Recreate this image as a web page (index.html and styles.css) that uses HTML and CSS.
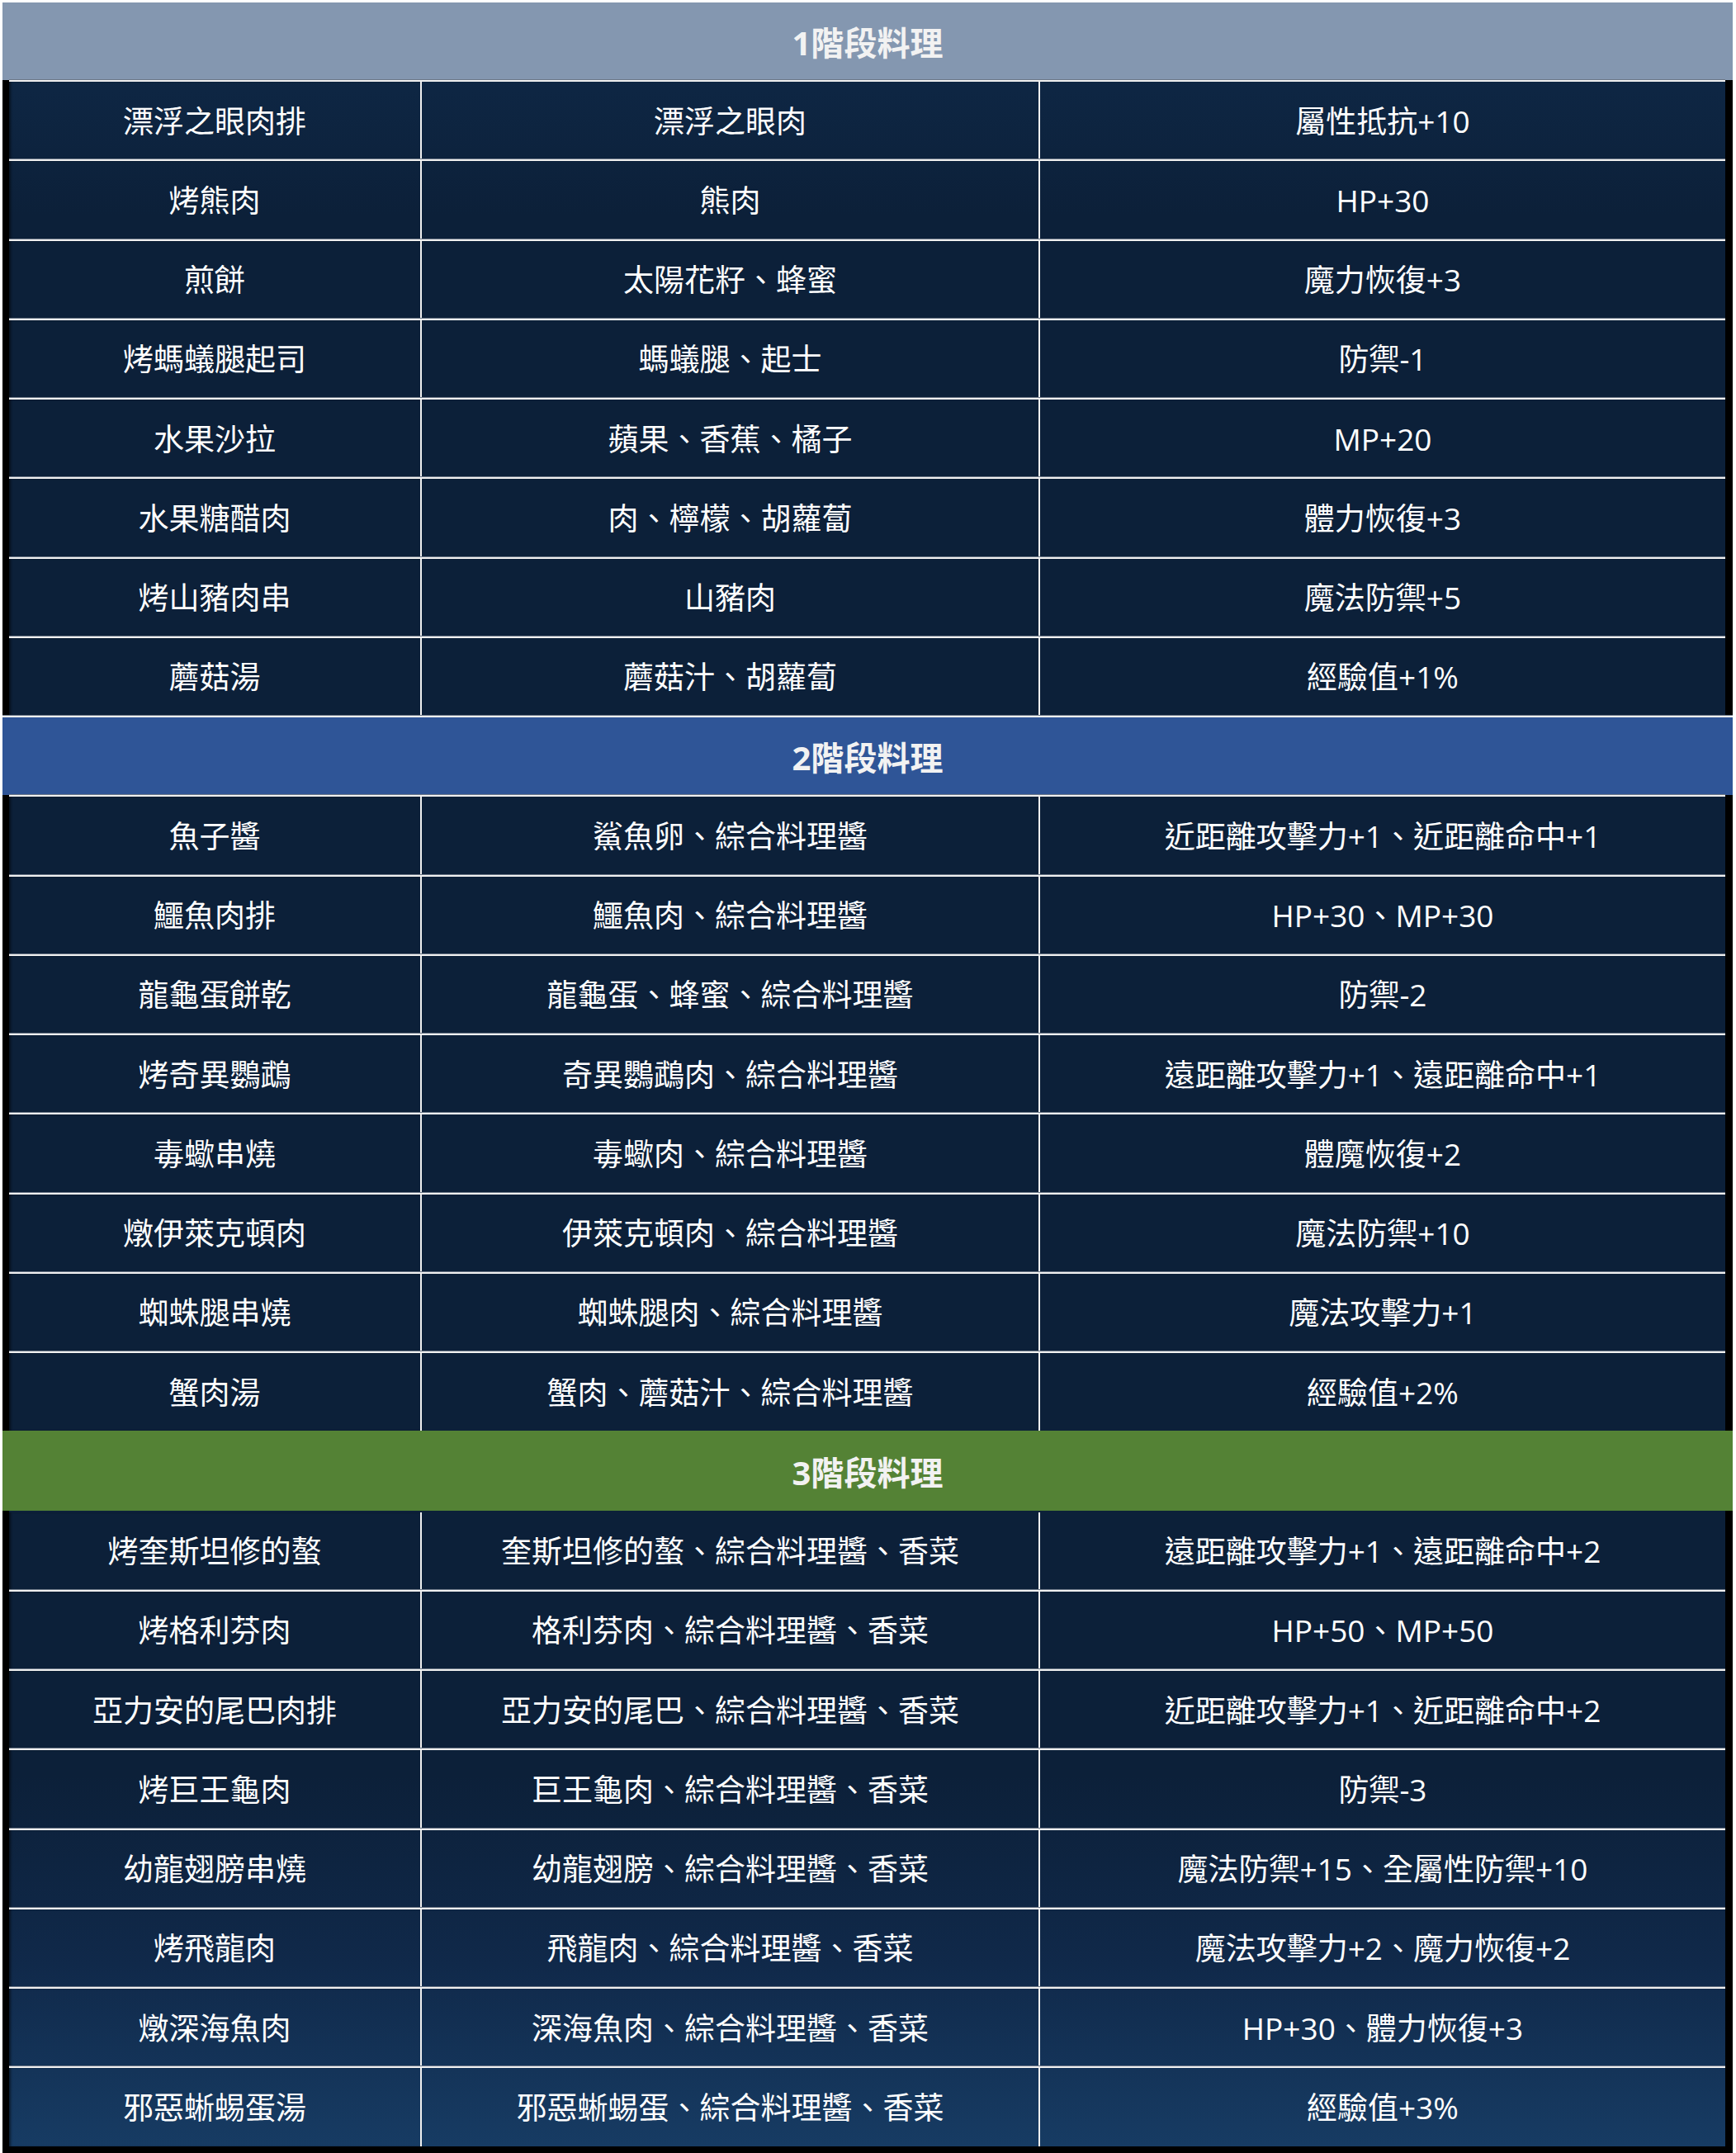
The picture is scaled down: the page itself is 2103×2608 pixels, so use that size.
FILE: index.html
```html
<!DOCTYPE html>
<html lang="zh-Hant">
<head>
<meta charset="utf-8">
<title>料理表</title>
<link rel="stylesheet" href="styles.css">
</head>
<body>
<div class="sheet">
  <div class="band band-1 first">1階段料理</div>
  <div class="row"><div class="c">漂浮之眼肉排</div><div class="c">漂浮之眼肉</div><div class="c">屬性抵抗+10</div></div>
  <div class="row"><div class="c">烤熊肉</div><div class="c">熊肉</div><div class="c">HP+30</div></div>
  <div class="row"><div class="c">煎餅</div><div class="c">太陽花籽、蜂蜜</div><div class="c">魔力恢復+3</div></div>
  <div class="row"><div class="c">烤螞蟻腿起司</div><div class="c">螞蟻腿、起士</div><div class="c">防禦-1</div></div>
  <div class="row"><div class="c">水果沙拉</div><div class="c">蘋果、香蕉、橘子</div><div class="c">MP+20</div></div>
  <div class="row"><div class="c">水果糖醋肉</div><div class="c">肉、檸檬、胡蘿蔔</div><div class="c">體力恢復+3</div></div>
  <div class="row"><div class="c">烤山豬肉串</div><div class="c">山豬肉</div><div class="c">魔法防禦+5</div></div>
  <div class="row"><div class="c">蘑菇湯</div><div class="c">蘑菇汁、胡蘿蔔</div><div class="c">經驗值+1%</div></div>

  <div class="band band-2">2階段料理</div>
  <div class="row"><div class="c">魚子醬</div><div class="c">鯊魚卵、綜合料理醬</div><div class="c">近距離攻擊力+1、近距離命中+1</div></div>
  <div class="row"><div class="c">鱷魚肉排</div><div class="c">鱷魚肉、綜合料理醬</div><div class="c">HP+30、MP+30</div></div>
  <div class="row"><div class="c">龍龜蛋餅乾</div><div class="c">龍龜蛋、蜂蜜、綜合料理醬</div><div class="c">防禦-2</div></div>
  <div class="row"><div class="c">烤奇異鸚鵡</div><div class="c">奇異鸚鵡肉、綜合料理醬</div><div class="c">遠距離攻擊力+1、遠距離命中+1</div></div>
  <div class="row"><div class="c">毒蠍串燒</div><div class="c">毒蠍肉、綜合料理醬</div><div class="c">體魔恢復+2</div></div>
  <div class="row"><div class="c">燉伊萊克頓肉</div><div class="c">伊萊克頓肉、綜合料理醬</div><div class="c">魔法防禦+10</div></div>
  <div class="row"><div class="c">蜘蛛腿串燒</div><div class="c">蜘蛛腿肉、綜合料理醬</div><div class="c">魔法攻擊力+1</div></div>
  <div class="row"><div class="c">蟹肉湯</div><div class="c">蟹肉、蘑菇汁、綜合料理醬</div><div class="c">經驗值+2%</div></div>

  <div class="band band-3">3階段料理</div>
  <div class="row after-green"><div class="c">烤奎斯坦修的螯</div><div class="c">奎斯坦修的螯、綜合料理醬、香菜</div><div class="c">遠距離攻擊力+1、遠距離命中+2</div></div>
  <div class="row"><div class="c">烤格利芬肉</div><div class="c">格利芬肉、綜合料理醬、香菜</div><div class="c">HP+50、MP+50</div></div>
  <div class="row"><div class="c">亞力安的尾巴肉排</div><div class="c">亞力安的尾巴、綜合料理醬、香菜</div><div class="c">近距離攻擊力+1、近距離命中+2</div></div>
  <div class="row"><div class="c">烤巨王龜肉</div><div class="c">巨王龜肉、綜合料理醬、香菜</div><div class="c">防禦-3</div></div>
  <div class="row"><div class="c">幼龍翅膀串燒</div><div class="c">幼龍翅膀、綜合料理醬、香菜</div><div class="c">魔法防禦+15、全屬性防禦+10</div></div>
  <div class="row"><div class="c">烤飛龍肉</div><div class="c">飛龍肉、綜合料理醬、香菜</div><div class="c">魔法攻擊力+2、魔力恢復+2</div></div>
  <div class="row"><div class="c">燉深海魚肉</div><div class="c">深海魚肉、綜合料理醬、香菜</div><div class="c">HP+30、體力恢復+3</div></div>
  <div class="row"><div class="c">邪惡蜥蜴蛋湯</div><div class="c">邪惡蜥蜴蛋、綜合料理醬、香菜</div><div class="c">經驗值+3%</div></div>
</div>
</body>
</html>
```

FILE: styles.css
```css
html, body {
  margin: 0;
  padding: 0;
  background: #ffffff;
  overflow: hidden;
}

body {
  font-family: "Open Sans", "Noto Sans CJK TC", "Noto Sans CJK SC", sans-serif;
  color: #ffffff;
}

.sheet {
  margin: 3px 0 0 3px;
  width: 2096px;
  padding-bottom: 8px;
  background: #000000;
  display: flex;
  flex-direction: column;
}

.band {
  height: 96.26px;
  box-sizing: border-box;
  border-top: 2px solid #f0f0f0;
  box-shadow: 0 -1px 0 #6d7888;
  display: flex;
  align-items: center;
  justify-content: center;
  font-size: 40px;
  font-weight: 700;
  color: #f2f2f2;
  position: relative;
}

.band.first {
  height: 94px;
  border-top: 0;
  box-shadow: none;
}

.band-1 { background: #8497b0; }
.band-2 { background: #2f5597; }
.band-3 {
  background: #548235;
  border-top-color: #548235;
  box-shadow: none;
}

.row {
  height: 96.26px;
  box-sizing: border-box;
  margin: 0 9px 0 8px;
  border-top: 2px solid #f0f0f0;
  box-shadow: 0 -1px 0 #6d7888;
  display: grid;
  grid-template-columns: 498px 749px 1fr;
  background: linear-gradient(to bottom,
      #12304f 0px,
      #0e2643 110px,
      #0c2039 260px,
      #0c2039 2150px,
      #10294a 2380px,
      #173c64 2605px) fixed;
  position: relative;
}

.row.after-green {
  border-top-color: #0c2039;
  box-shadow: none;
}

.c {
  display: flex;
  align-items: center;
  justify-content: center;
  font-size: 37px;
  line-height: 1;
  white-space: nowrap;
}

.c + .c {
  border-left: 2px solid #f0f0f0;
}

.row .c:first-child {
  box-shadow: inset 3px 0 3px -1px rgba(0, 0, 0, 0.5);
}
```
